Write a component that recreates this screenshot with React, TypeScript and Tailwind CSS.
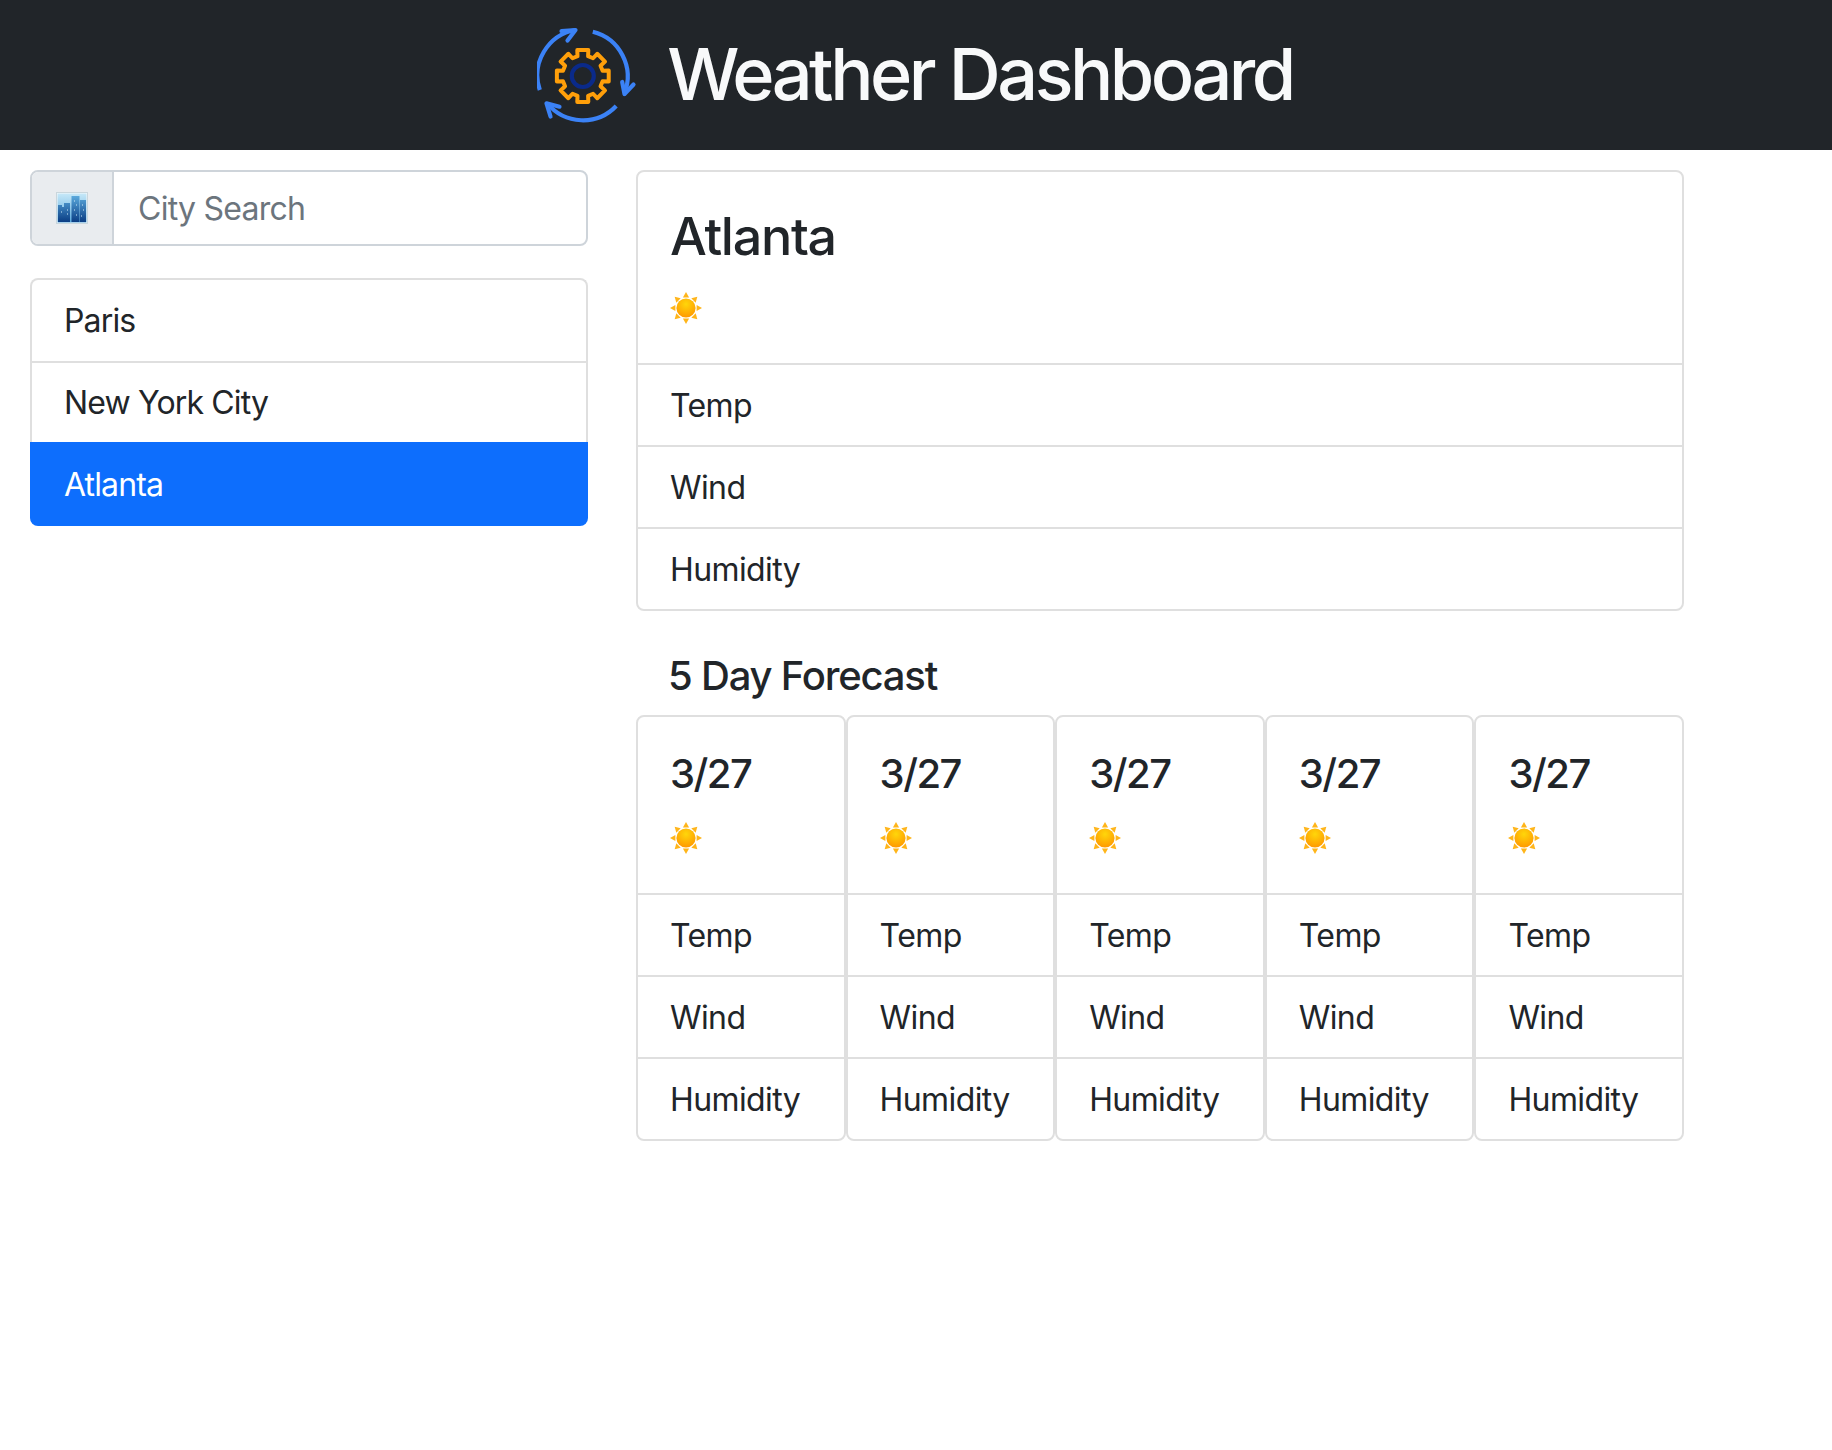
const font = "font-['Inter','Liberation_Sans',sans-serif]"

// one tooth every 45deg, polar points around the gear centre
function gearPath() {
  const pt = (r: number, deg: number) => {
    const a = (deg * Math.PI) / 180
    return `${(r * Math.sin(a)).toFixed(2)} ${(-r * Math.cos(a)).toFixed(2)}`
  }
  const parts: string[] = []
  for (let i = 0; i < 8; i++) {
    const a = i * 45
    parts.push(pt(20.5, a - 15), pt(26.5, a - 12), pt(26.5, a + 12), pt(20.5, a + 15))
  }
  return `M${parts.join(" L")} Z`
}

function LogoIcon() {
  return (
    <svg width="100" height="100" viewBox="1.5 0 100 100" fill="none" strokeLinecap="round" strokeLinejoin="round">
      {/* rotating arrows */}
      <g stroke="#3b82f6" strokeWidth="4.2">
        <path strokeLinecap="butt" d="M4.3 65 A46 46 0 0 1 40 5" />
        <path d="M26 6 L40 5 L32 15.5" />
        <path strokeLinecap="butt" d="M57.3 6.7 A46 46 0 0 1 89 68" />
        <path d="M86.7 57 L89 69 L98 59.5" />
        <path strokeLinecap="butt" d="M80.7 81 A46 46 0 0 1 11.7 78.3" />
        <path d="M24 81.7 L11 78.3 L15 91.5" />
      </g>
      {/* gear */}
      <g transform="translate(47.3 51)">
        <path d={gearPath()} stroke="#ff9f0a" strokeWidth="4" />
        <circle r="11" stroke="#0a2a8a" strokeWidth="4.2" />
      </g>
    </svg>
  )
}

function CityIcon() {
  return (
    <svg width="32" height="32" viewBox="0 0 32 32">
      <defs>
        <linearGradient id="citySky" x1="0" y1="0" x2="0" y2="1">
          <stop offset="0" stopColor="#c6e8f8" />
          <stop offset="1" stopColor="#5aa9dc" />
        </linearGradient>
        <linearGradient id="cityBlock" x1="0" y1="0" x2="0" y2="1">
          <stop offset="0" stopColor="#5aa9dc" />
          <stop offset="1" stopColor="#0a3d84" />
        </linearGradient>
      </defs>
      <rect x="0.5" y="0.5" width="31" height="31" fill="#f5f8fa" stroke="#c9d6dc" />
      <rect x="1.5" y="1.5" width="29" height="29" fill="url(#citySky)" />
      <path
        d="M2 30 V13 H6 V15 H8 V11 H14 V30 Z M15.5 30 V4 H23.5 V30 Z M24 30 V8 H30 V30 Z"
        fill="url(#cityBlock)"
      />
      <path d="M11 18 h1 M11 22 h1 M5 20 h1 M18 9 h1 M20 13 h1 M18 18 h1 M20 23 h1 M26 13 h1 M27 18 h1 M25 24 h1" stroke="#cfeaf8" strokeWidth="1" />
    </svg>
  )
}

function SunIcon() {
  const rays = [0, 45, 90, 135, 180, 225, 270, 315]
  return (
    <svg width="32" height="32" viewBox="0 0 32 32">
      <defs>
        <radialGradient id="sunDisc" cx="0.5" cy="0.3" r="0.75">
          <stop offset="0" stopColor="#ffd60a" />
          <stop offset="1" stopColor="#ff9500" />
        </radialGradient>
      </defs>
      {rays.map((r) => (
        <path key={r} d="M12.9 5.4 L16 0 L19.1 5.4 Z" fill="#ffb51a" transform={`rotate(${r} 16 16)`} />
      ))}
      <circle cx="16" cy="16" r="9.6" fill="url(#sunDisc)" />
    </svg>
  )
}

function StatRows() {
  return (
    <ul>
      {["Temp", "Wind", "Humidity"].map((label) => (
        <li key={label} className="h-[82px] border-t-2 border-[#dfdfdf] px-[32px] pt-[17px] text-[32px] leading-[48px] tracking-[-0.6px]">
          {label}
        </li>
      ))}
    </ul>
  )
}

function ForecastCard() {
  return (
    <div className="w-[210px] rounded-[8px] border-2 border-[#dfdfdf]">
      <div className="h-[176px] px-[32px] pt-[33px]">
        <h5 className="text-[40px] leading-[48px] font-medium tracking-[-1.5px]">3/27</h5>
        <div className="mt-[24px]">
          <SunIcon />
        </div>
      </div>
      <StatRows />
    </div>
  )
}

export default function App() {
  return (
    <div className={`${font} min-h-[1450px] bg-white text-[#212529]`}>
      <header className="flex h-[150px] items-center justify-center gap-[30px] bg-[#212529] pr-[2px]">
        <LogoIcon />
        <h1 className="-mt-[2px] text-[72px] leading-[86px] font-[550] tracking-[-3.5px] text-[#f8f9fa]">Weather Dashboard</h1>
      </header>

      <div className="flex items-start gap-[48px] pt-[20px] pl-[30px]">
        <aside className="w-[558px]">
          <div className="flex h-[76px] overflow-hidden rounded-[8px] border-2 border-[#ced4da]">
            <div className="flex w-[82px] items-center justify-center border-r-2 border-[#ced4da] bg-[#e9ecef]">
              <CityIcon />
            </div>
            <div className="flex items-center pt-[2px] pl-[24px] text-[32px] tracking-[-0.75px] text-[#6c757d]">City Search</div>
          </div>

          <ul className="mt-[32px] text-[32px] leading-[48px] tracking-[-0.85px]">
            <li className="h-[83px] rounded-t-[8px] border-x-2 border-t-2 border-[#dfdfdf] px-[32px] pt-[17px]">Paris</li>
            <li className="h-[81px] border-x-2 border-t-2 border-[#dfdfdf] px-[32px] pt-[16px]">New York City</li>
            <li className="h-[84px] rounded-b-[8px] bg-[#0d6efd] px-[34px] pt-[19px] text-white">Atlanta</li>
          </ul>
        </aside>

        <main className="w-[1048px]">
          <div className="rounded-[8px] border-2 border-[#dfdfdf]">
            <div className="h-[191px] px-[32px] pt-[34px]">
              <h2 className="text-[52px] leading-[62px] font-medium tracking-[-1.3px]">Atlanta</h2>
              <div className="mt-[24px]">
                <SunIcon />
              </div>
            </div>
            <StatRows />
          </div>

          <h4 className="mt-[41px] pl-[32px] text-[40px] leading-[48px] font-medium tracking-[-1.2px]">5 Day Forecast</h4>

          <div className="mt-[15px] flex">
            {[0, 1, 2, 3, 4].map((i) => (
              <ForecastCard key={i} />
            ))}
          </div>
        </main>
      </div>
    </div>
  )
}
